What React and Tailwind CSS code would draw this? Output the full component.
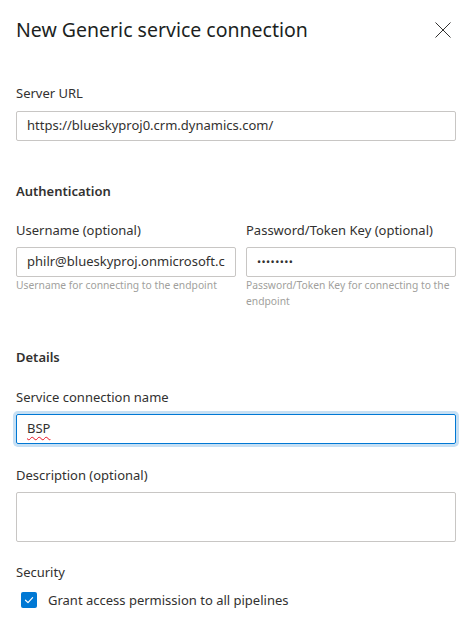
import React from "react";

function Label({ children, className = "" }) {
  return (
    <div className={"text-[13px] leading-[20px] text-[#323130] " + className}>
      {children}
    </div>
  );
}

function Box({ children, className = "" }) {
  return (
    <div
      className={
        "h-[30px] border border-[#c8c6c4] rounded-[2px] px-[10px] flex items-center text-[13px] text-[#323130] overflow-hidden whitespace-nowrap " +
        className
      }
    >
      {children}
    </div>
  );
}

export default function App() {
  return (
    <div className="w-[474px] h-[622px] bg-white overflow-hidden font-['Noto_Sans',sans-serif] text-[#323130]">
      <div className="pl-[16px] pr-[18px]">
        {/* header */}
        <div className="mt-[16px] h-[28px] flex items-center justify-between">
          <div className="text-[19.5px] leading-[28px] font-normal text-[#201f1e]">
            New Generic service connection
          </div>
          <div className="w-[26px] h-[26px] flex items-center justify-center">
            <svg width="16" height="16" viewBox="0 0 16 16">
              <path d="M0.5 0.5 L15.5 15.5 M15.5 0.5 L0.5 15.5" stroke="#323130" strokeWidth="1" fill="none" />
            </svg>
          </div>
        </div>

        <div className="w-[440px]">
          <Label className="mt-[39px]">Server URL</Label>
          <Box className="mt-[8px]">https://blueskyproj0.crm.dynamics.com/</Box>

          <Label className="mt-[40px] font-semibold">Authentication</Label>

          <div className="mt-[19px] grid grid-cols-[220px_210px] gap-x-[10px]">
            <div>
              <Label>Username (optional)</Label>
              <Box className="mt-[7px]">philr@blueskyproj.onmicrosoft.c</Box>
              <div className="text-[10.3px] leading-[16px] text-[#a19f9d]">
                Username for connecting to the endpoint
              </div>
            </div>
            <div>
              <Label>Password/Token Key (optional)</Label>
              <Box className="mt-[7px] px-[5px]">
                <span className="text-[11px] tracking-[0.4px]">••••••••</span>
              </Box>
              <div className="text-[10.3px] leading-[16px] text-[#a19f9d]">
                Password/Token Key for connecting to the endpoint
              </div>
            </div>
          </div>

          <Label className="mt-[38px] font-semibold">Details</Label>

          <Label className="mt-[20px]">Service connection name</Label>
          <div className="mt-[7px] h-[30px] border border-[#0078d4] rounded-[2px] px-[10px] flex items-center text-[13px] text-[#323130] shadow-[0_0_0_3px_#c7e0f4]">
            <span className="underline decoration-wavy decoration-[#e81123] decoration-1 underline-offset-[3px]">
              BSP
            </span>
          </div>

          <Label className="mt-[21px]">Description (optional)</Label>
          <div className="mt-[7px] h-[50px] border border-[#c8c6c4] rounded-[2px]"></div>

          <Label className="mt-[20px]">Security</Label>
          <div className="mt-[8px] flex items-center h-[20px] pl-[5px]">
            <div className="w-[16px] h-[16px] rounded-[2px] bg-[#0078d4] flex items-center justify-center">
              <svg width="10" height="10" viewBox="0 0 10 10">
                <path d="M1.5 5.2 L4 7.6 L8.6 2.6" stroke="white" strokeWidth="1.2" fill="none" strokeLinecap="round" strokeLinejoin="round" />
              </svg>
            </div>
            <span className="ml-[11px] text-[13px] leading-[20px] text-[#323130]">
              Grant access permission to all pipelines
            </span>
          </div>
        </div>
      </div>
    </div>
  );
}
